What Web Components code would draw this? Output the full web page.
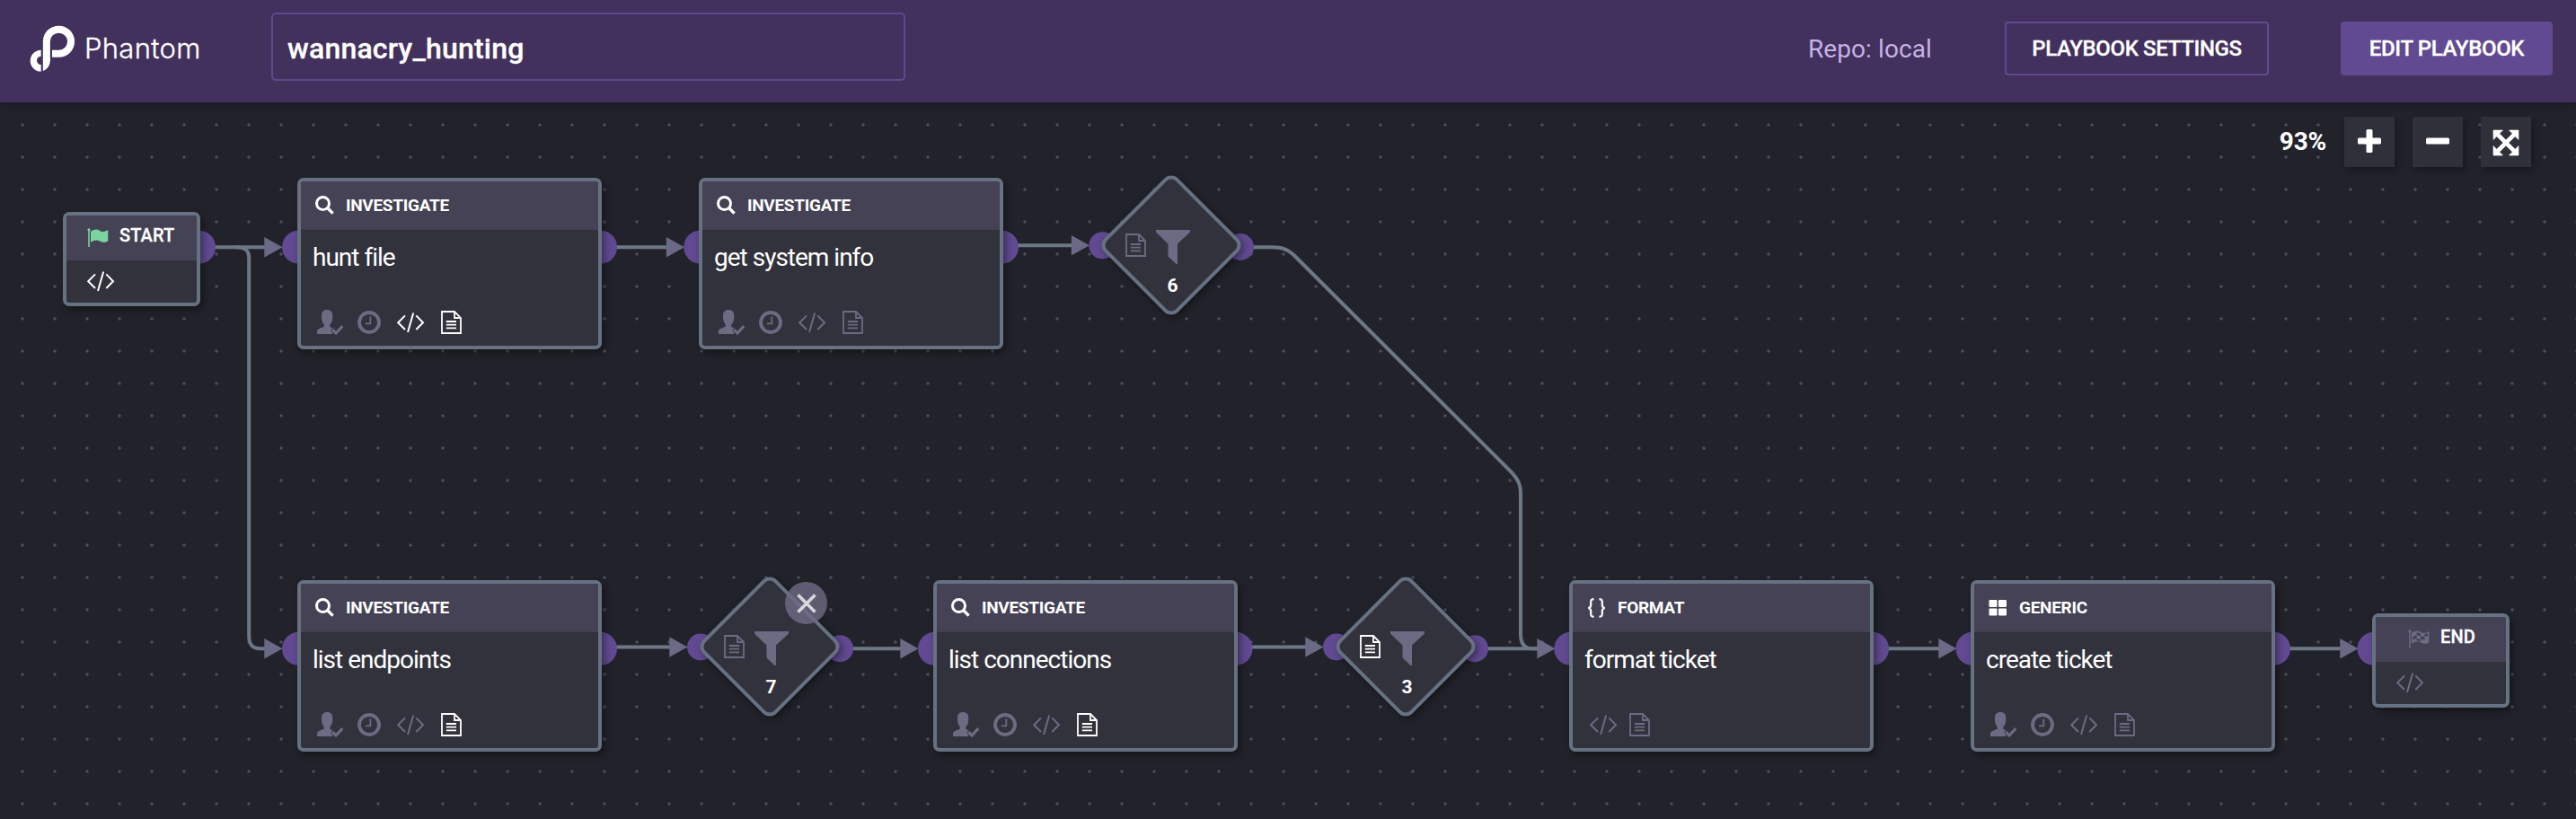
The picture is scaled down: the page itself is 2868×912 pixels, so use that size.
<!DOCTYPE html>
<html lang="en">
<head>
<meta charset="utf-8">
<title>Playbook editor</title>
<style>
html,body{margin:0;height:100%;background:#22222b}
body{font-family:Roboto,"Liberation Sans",sans-serif;color:#fff;overflow:hidden}
</style>
</head>
<body>
<pb-app></pb-app>
<script>
const define = (name, html, setup) => customElements.define(name, class extends HTMLElement {
  constructor() {
    super();
    const t = document.createElement('template');
    t.innerHTML = html;
    this.attachShadow({ mode: 'open' }).append(t.content.cloneNode(true));
  }
  connectedCallback() { if (setup) setup(this, this.shadowRoot); }
});

/* Icons: [width, height, markup] */
const ICONS = {
  code: [30, 23, '<path d="M9 3.4 1.2 11.2 9 19M21.3 3.4 29 11.2 21.3 19M18.2.5 12 22" fill="none" stroke="currentColor" stroke-width="2"/>'],
  doc: [23, 26, '<path d="M1 1H15L22 8V25H1ZM15 1V8H22M5.800 12H17M5.800 15.700H17M5.800 19.400H17" fill="none" stroke="currentColor" stroke-width="1.800"/>'],
  user: [29, 28, '<path d="M5 7C5 2 7 0 11 0s6.300 2 6.300 7c0 5-1 7.500-3 9.500V19l3.500 1.500-2.300 1.500 2 5H0v-3c0-2.500 3.500-3.500 7.800-5.200v-2.300C6 14 5 12 5 7Z" fill="currentColor"/><path d="M17.300 22.200 21 26l7.300-7.800" fill="none" stroke="currentColor" stroke-width="3.200"/>'],
  clock: [26, 26, '<circle cx="13" cy="13" r="11" fill="none" stroke="currentColor" stroke-width="3.800"/><path d="M14.300 6.500V14.300H9" fill="none" stroke="currentColor" stroke-width="1.800"/>'],
  search: [21, 21, '<circle cx="8.500" cy="8.500" r="7" fill="none" stroke="currentColor" stroke-width="3"/><path d="M13.500 13.500 19.600 19.600" stroke="currentColor" stroke-width="3.400"/>'],
  flag: [24, 22, '<circle cx="2" cy="1.800" r="1.600" fill="currentColor"/><path d="M2 2V21" stroke="currentColor" stroke-width="1.600"/><path d="M4 3.800C8 1 11.500 1 14 2.900s6 1 9.300-.9V14.200c-3 2-6.300 1.900-9.300.3S8 13.500 4 16Z" fill="currentColor"/>'],
  checkered: [24, 22, '<circle cx="2" cy="1.800" r="1.600" fill="currentColor"/><path d="M2 2V21" stroke="currentColor" stroke-width="1.600"/><path d="M4 3.800C8 1 11.500 1 14 2.900s6 1 9.300-.9V14.200c-3 2-6.300 1.900-9.300.3S8 13.500 4 16Z" fill="currentColor"/><path d="M9.500 3.200 14 4.200v3.300L9.500 6.300ZM18.500 5l3.500-1v3.300l-3.500.8ZM5.300 8 9.500 6.300v3.800L5.300 11.500ZM14 7.500l4.500.6v3.600L14 11ZM9.500 10.100 14 11v2.400l-4.500-1Z" fill="#444254"/>'],
  braces: [21, 22, '<path d="M7.500 1.200C4.500 1.200 4.200 2.500 4.200 4.500V7.500c0 2-.8 3.200-3 3.500 2.200.3 3 1.500 3 3.500v3c0 2 .3 3.300 3.300 3.300M13.500 1.200c3 0 3.300 1.300 3.300 3.300V7.500c0 2 .8 3.200 3 3.500-2.200.3-3 1.500-3 3.500v3c0 2-.3 3.300-3.300 3.300" fill="none" stroke="currentColor" stroke-width="2.200"/>'],
  grid: [21, 18, '<g fill="currentColor"><rect x=".5" y="0" width="9" height="8" rx="1.200"/><rect x="11" y="0" width="9" height="8" rx="1.200"/><rect x=".5" y="9.400" width="9" height="8" rx="1.200"/><rect x="11" y="9.400" width="9" height="8" rx="1.200"/></g>'],
  funnel: [38, 38, '<path d="M0 0H38V2.500L24 15.500V38H22.500L13.500 29.500V15.500L0 2.500Z" fill="currentColor"/>'],
  plus: [26, 26, '<path d="M11 0h4a1.500 1.500 0 0 1 1.500 1.500V9.500H24.500A1.500 1.500 0 0 1 26 11v4a1.500 1.500 0 0 1-1.500 1.500H16.500V24.500A1.500 1.500 0 0 1 15 26H11A1.500 1.500 0 0 1 9.500 24.500V16.500H1.500A1.500 1.500 0 0 1 0 15V11A1.500 1.500 0 0 1 1.500 9.500H9.500V1.500A1.500 1.500 0 0 1 11 0Z" fill="currentColor"/>'],
  minus: [26, 26, '<rect y="9.500" width="26" height="7" rx="1.500" fill="currentColor"/>'],
  expand: [28, 28, '<path d="M5 5 23 23M23 5 5 23" stroke="currentColor" stroke-width="4.600"/><path d="M0 0H10.500L0 10.500ZM28 0V10.500L17.500 0ZM0 28V17.500L10.500 28ZM28 28H17.500L28 17.500Z" fill="currentColor" stroke="currentColor" stroke-width=".6" stroke-linejoin="round"/>'],
  close: [22, 22, '<path d="M1.500 1.500 20.500 20.500M20.500 1.500 1.500 20.500" stroke="currentColor" stroke-width="3.600"/>']
};

define('pb-icon', `<style>:host{display:block;flex:none}svg{display:block;overflow:visible}</style><div></div>`, (el, root) => {
  const [w, h, body] = ICONS[el.getAttribute('name')];
  root.querySelector('div').innerHTML = `<svg width="${w}" height="${h}" viewBox="0 0 ${w} ${h}">${body}</svg>`;
});

define('pb-logo', `<style>
:host{display:flex;align-items:flex-start;width:270px;height:58px}
svg{display:block;flex:none;margin-left:-2px}
span{font:300 31px/40px Inter,"Open Sans",sans-serif;margin:8px 0 0 8px;letter-spacing:.3px;-webkit-text-stroke:.35px #fff}
</style>
<svg width="56" height="56" viewBox="30 48 168 168"><g fill="#fff">
<path d="M95.500 172V108A40.800 40.800 0 1 1 136.500 149.500H114" fill="none" stroke="#fff" stroke-width="24"/>
<path d="M83.500 165H107.500V172A37 37 0 0 1 83.500 208Z"/>
<path d="M77 137A36 36 0 0 0 77 209V186A14 14 0 0 1 77 158Z"/></g></svg><span>Phantom</span>`);

define('pb-button', `<style>
:host{display:flex;box-sizing:border-box;height:60px;align-items:center;justify-content:center;border:2px solid #614a92;border-radius:4px;font-size:24px;font-weight:500;white-space:nowrap;letter-spacing:-.35px;-webkit-text-stroke:.3px #fff}
:host([primary]){background:#614a92}
</style><slot></slot>`);

define('pb-header', `<style>
:host{display:flex;box-sizing:border-box;height:114px;flex:none;align-items:flex-start;background:#42305d;padding:14px 26px 0 32px;position:relative;box-shadow:0 1px 8px rgba(0,0,0,.35)}
pb-logo{margin-top:12px}
.name{box-sizing:border-box;width:706px;height:76px;border:2px solid #5f4a91;border-radius:5px;padding:8px 0 0 16px;font-size:32px;font-weight:500;line-height:60px;letter-spacing:.2px;-webkit-text-stroke:.3px #fff}
.repo{margin-left:auto;font-size:28px;line-height:60px;color:#c6b3e6;margin-top:11px;letter-spacing:.1px}
pb-button{margin-top:10px}
.a{width:294px;margin-left:81px}.b{width:236px;margin-left:80px}
</style>
<pb-logo></pb-logo><div class="name">wannacry_hunting</div><div class="repo">Repo: local</div>
<pb-button class="a">PLAYBOOK SETTINGS</pb-button><pb-button class="b" primary>EDIT PLAYBOOK</pb-button>`);

const place = el => {
  el.style.left = el.getAttribute('x') + 'px';
  el.style.top = el.getAttribute('y') + 'px';
};
const BOX = `position:absolute;box-sizing:border-box;border:4px solid #667181;border-radius:7px;background:#32323c;box-shadow:3px 4px 9px rgba(0,0,0,.42)`;

define('pb-card', `<style>
:host{display:flex;flex-direction:column;width:339px;height:191px;${BOX}}
header{display:flex;align-items:center;height:54px;box-sizing:border-box;background:#444254;border-bottom:1px solid #3f3e4d;padding:0 0 0 16px;border-radius:3px 3px 0 0}
.kind{width:34px;display:flex}
.type{font-size:19px;font-weight:700;line-height:24px;padding-top:1px;letter-spacing:-.3px}
.title{font-size:28px;line-height:36px;padding:13px 0 0 13px;letter-spacing:-1px}
footer{display:flex;align-items:center;height:28px;margin:auto 0 12px 18px;color:#6d6b83}
footer pb-icon[name=clock]{margin:0 18px 0 16px}
footer pb-icon[name=doc]{margin-left:19px}
:host([short]) footer{margin-left:19px}:host([short]) footer pb-icon[name=doc]{margin-left:14px}
.on{color:#fff}
</style>
<header><span class="kind"></span><span class="type"></span></header>
<div class="title"><slot></slot></div><footer></footer>`, (el, root) => {
  place(el);
  const on = (el.getAttribute('on') || '').split(' ');
  root.querySelector('.kind').innerHTML = `<pb-icon name="${el.getAttribute('icon')}"></pb-icon>`;
  root.querySelector('.type').textContent = el.getAttribute('type');
  const names = el.hasAttribute('short') ? ['code', 'doc'] : ['user', 'clock', 'code', 'doc'];
  root.querySelector('footer').innerHTML = names.map(n => `<pb-icon name="${n}" class="${on.includes(n) ? 'on' : ''}"></pb-icon>`).join('');
});

define('pb-terminal', `<style>
:host{display:flex;flex-direction:column;width:153px;height:105px;${BOX}}
header{display:flex;align-items:flex-start;height:50px;box-sizing:border-box;background:#444254;border-radius:3px 3px 0 0;padding:14px 0 0 23px;gap:12px;font-size:20px;font-weight:500;line-height:24px}
:host([end]) header{padding-left:36px}
header slot{display:block;margin-top:-4px;letter-spacing:.1px;-webkit-text-stroke:.3px #fff}
.flag{color:#7bd3a0;margin-top:0}
:host([end]) .flag,:host([end]) .code{color:#6d6b83}
.code{margin:12px 0 0 23px}
</style><header><span class="flag"></span><slot></slot></header><pb-icon class="code" name="code"></pb-icon>`, (el, root) => {
  place(el);
  root.querySelector('.flag').innerHTML = `<pb-icon name="${el.hasAttribute('end') ? 'checkered' : 'flag'}"></pb-icon>`;
});

define('pb-filter', `<style>
:host{display:grid;position:absolute;width:154px;height:154px;grid-template-rows:60px 46px 1fr}
.shape{position:absolute;left:19px;top:19px;width:116px;height:116px;box-sizing:border-box;border:4px solid #667181;border-radius:11px;background:#32323c;transform:rotate(45deg);box-shadow:4px 0 9px rgba(0,0,0,.42)}
.icons{position:relative;grid-row:2;display:flex;padding-left:26px;gap:11px;color:#6d6b83;align-items:flex-start}
.icons :first-child{margin-top:4px}
:host([on]) .icons :first-child{color:#fff}
.num{position:relative;grid-row:3;text-align:center;padding-left:3px;font-size:21px;font-weight:700;line-height:28px;margin-top:2px}
.x{position:absolute;left:94px;top:5px;width:47px;height:47px;border-radius:50%;background:rgba(111,108,133,.8);display:none;align-items:center;justify-content:center;color:#d8d8da}
:host([closable]) .x{display:flex}
</style><div class="shape"></div><div class="icons"><pb-icon name="doc"></pb-icon><pb-icon name="funnel"></pb-icon></div><div class="num"><slot></slot></div><div class="x"><pb-icon name="close"></pb-icon></div>`, (el) => place(el));

define('pb-edges', `<style>:host{display:block;position:absolute;inset:0}svg{display:block}</style><div></div>`, (el, root) => {
  const lines = ['M238 275.300H300', 'M262 275.300C274 275.300 277.200 279 277.200 288V708C277.200 718 281 722.300 290 722.300H300',
    'M685 275.300H745', 'M1132 273.300H1196', 'M1394 275.300H1416C1427 275.300 1433 277 1441 284.500L1680 523C1690 533 1693 539 1693 550V706C1693 717 1697 722.300 1706 722.300H1714',
    'M685 720.500H749', 'M948 722.300H1006', 'M1392 720.500H1457', 'M1655 722.300H1714', 'M2101 722.300H2161', 'M2548 722.300H2608'];
  const tips = [[314, 275.3], [761.5, 275.3], [1212.5, 273.3], [314, 722.3], [765, 720.5], [1022, 722.3], [1473, 720.5], [1731, 722.3], [2178, 722.3], [2625, 722.3]];
  const big = [[221.5, 275.2], [332.5, 275.2], [668.5, 275.2], [779.7, 275.2], [1115.5, 275.2],
    [332.5, 722.3], [668.5, 722.3], [1040.5, 722.3], [1376, 722.3], [1748.8, 722.3], [2084.5, 722.3], [2196, 722.3], [2531.5, 722.3], [2643, 722.3]];
  const small = [[1227.3, 273.3], [1381, 275], [780, 720.5], [935, 722.2], [1488, 720.5], [1642, 722.2]];
  root.querySelector('div').innerHTML = `<svg width="2868" height="798" viewBox="0 114 2868 798">
    <g fill="none" stroke="#6d7886" stroke-width="4">${lines.map(d => `<path d="${d}"/>`).join('')}</g>
    <g fill="#6b6a86">${tips.map(([x, y]) => `<path d="M${x + .5} ${y}L${x - 19.7} ${y - 11.2}V${y + 11.2}Z"/>`).join('')}</g>
    <g fill="#614a92">${big.map(([x, y]) => `<circle cx="${x}" cy="${y}" r="18.500"/>`).join('')}${small.map(([x, y]) => `<circle cx="${x}" cy="${y}" r="15"/>`).join('')}</g></svg>`;
});

define('pb-zoom', `<style>
:host{position:absolute;right:50px;top:16px;display:flex;gap:20px;align-items:center}
b{font-size:28px;font-weight:700;line-height:56px;letter-spacing:-.2px}
div{width:56px;height:56px;background:#30303b;display:flex;align-items:center;justify-content:center;box-shadow:3px 4px 8px rgba(0,0,0,.3)}
.p{padding-bottom:2px;height:54px}.e{padding-top:2px;height:54px}
</style><b>93%</b><div class="p"><pb-icon name="plus"></pb-icon></div><div class="p"><pb-icon name="minus"></pb-icon></div><div class="e"><pb-icon name="expand"></pb-icon></div>`);

define('pb-canvas', `<style>
:host{display:block;position:relative;flex:1;overflow:hidden;background:#22222b radial-gradient(circle at 18px 18px,#4f4f5c 0,#4f4f5c 1.100px,rgba(79,79,92,0) 2.200px) 7px 7px/36px 36px}
</style><pb-edges></pb-edges><slot></slot><pb-zoom></pb-zoom>`);

define('pb-app', `<style>:host{display:flex;flex-direction:column;height:912px}pb-header{z-index:1}</style>
<pb-header></pb-header>
<pb-canvas>
<pb-terminal x="70" y="122">START</pb-terminal>
<pb-card x="331" y="84" icon="search" type="INVESTIGATE" on="code doc">hunt file</pb-card>
<pb-card x="778" y="84" icon="search" type="INVESTIGATE">get system info</pb-card>
<pb-filter x="1227" y="82">6</pb-filter>
<pb-card x="331" y="532" icon="search" type="INVESTIGATE" on="doc">list endpoints</pb-card>
<pb-filter x="780" y="529" closable>7</pb-filter>
<pb-card x="1039" y="532" icon="search" type="INVESTIGATE" on="doc">list connections</pb-card>
<pb-filter x="1488" y="529" on>3</pb-filter>
<pb-card x="1747" y="532" icon="braces" type="FORMAT" short>format ticket</pb-card>
<pb-card x="2194" y="532" icon="grid" type="GENERIC">create ticket</pb-card>
<pb-terminal x="2641" y="569" end>END</pb-terminal>
</pb-canvas>`);
</script>
</body>
</html>
